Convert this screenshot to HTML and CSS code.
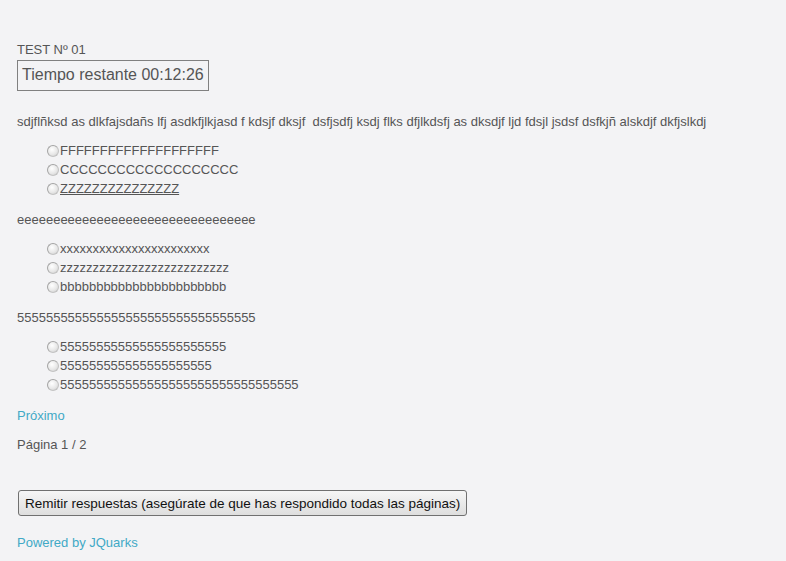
FILE: index.html
```html
<!DOCTYPE html>
<html lang="es">

<head>
    <meta charset="UTF-8">
    <title>Test</title>
    <link rel="stylesheet" href="styles.css">
</head>

<body>
    <div class="quiz">
        <div class="test-title">TEST Nº 01</div>
        <div class="timer">Tiempo restante 00:12:26</div>

        <div class="question">
            <p class="statement">sdjflñksd as dlkfajsdañs lfj asdkfjlkjasd f kdsjf dksjf &nbsp;dsfjsdfj ksdj flks dfjlkdsfj as dksdjf ljd fdsjl jsdsf dsfkjñ alskdjf dkfjslkdj</p>
            <ul class="answers">
                <li><input type="radio" name="q1"><span>FFFFFFFFFFFFFFFFFFFF</span></li>
                <li><input type="radio" name="q1"><span>CCCCCCCCCCCCCCCCCCC</span></li>
                <li><input type="radio" name="q1"><span><u>ZZZZZZZZZZZZZZZ</u></span></li>
            </ul>
        </div>

        <div class="question">
            <p class="statement">eeeeeeeeeeeeeeeeeeeeeeeeeeeeeeeee</p>
            <ul class="answers">
                <li><input type="radio" name="q2"><span>xxxxxxxxxxxxxxxxxxxxxxx</span></li>
                <li><input type="radio" name="q2"><span>zzzzzzzzzzzzzzzzzzzzzzzzzz</span></li>
                <li><input type="radio" name="q2"><span>bbbbbbbbbbbbbbbbbbbbbbb</span></li>
            </ul>
        </div>

        <div class="question">
            <p class="statement">555555555555555555555555555555555</p>
            <ul class="answers">
                <li><input type="radio" name="q3"><span>55555555555555555555555</span></li>
                <li><input type="radio" name="q3"><span>555555555555555555555</span></li>
                <li><input type="radio" name="q3"><span>555555555555555555555555555555555</span></li>
            </ul>
        </div>

        <a class="next" href="#">Próximo</a>
        <p class="page">Página 1 / 2</p>

        <button class="submit">Remitir respuestas (asegúrate de que has respondido todas las páginas)</button>

        <a class="powered" href="#">Powered by JQuarks</a>
    </div>
</body>

</html>
```

FILE: styles.css
```css
* {
    margin: 0;
    padding: 0;
}

body {
    background-color: #f3f3f5;
    color: #555;
    font-family: "Liberation Sans", Arial, sans-serif;
    font-size: 13px;
}

.quiz {
    padding: 42px 17px 0;
}

.test-title {
    line-height: 15px;
}

.timer {
    display: inline-block;
    margin-top: 3px;
    border: 1px solid #808080;
    padding: 4px 4px 6px;
    font-size: 16px;
    line-height: 19px;
}

.question {
    margin-top: 23px;
}

.question + .question {
    margin-top: 14px;
}

.statement {
    line-height: 15px;
}

.answers {
    list-style: none;
    margin: 12px 0 0 30px;
}

.answers li {
    display: flex;
    align-items: center;
    height: 19px;
}

.answers input {
    appearance: none;
    flex: none;
    width: 12px;
    height: 12px;
    margin: 0 1px 0 0;
    border: 1px solid #a4a4a4;
    border-right-color: #c2c2c2;
    border-bottom-color: #c2c2c2;
    border-radius: 50%;
    background: radial-gradient(circle at 40% 35%, #fff 0%, #e8e8e8 55%, #c8c8c8 100%);
}

.answers u {
    text-decoration-color: #555;
}

.next,
.powered {
    display: block;
    width: max-content;
    color: #41a9c6;
    text-decoration: none;
    line-height: 15px;
}

.next {
    margin-top: 14px;
}

.page {
    margin-top: 14px;
    line-height: 15px;
}

.submit {
    display: block;
    margin: 38px 0 0 1px;
    height: 26px;
    padding: 0 6px;
    border: 1px solid #707070;
    border-radius: 3px;
    background: linear-gradient(#f6f6f6, #dedede);
    color: #111;
    font-family: "Liberation Sans", Arial, sans-serif;
    font-size: 13.5px;
}

.powered {
    margin-top: 19px;
}
```
